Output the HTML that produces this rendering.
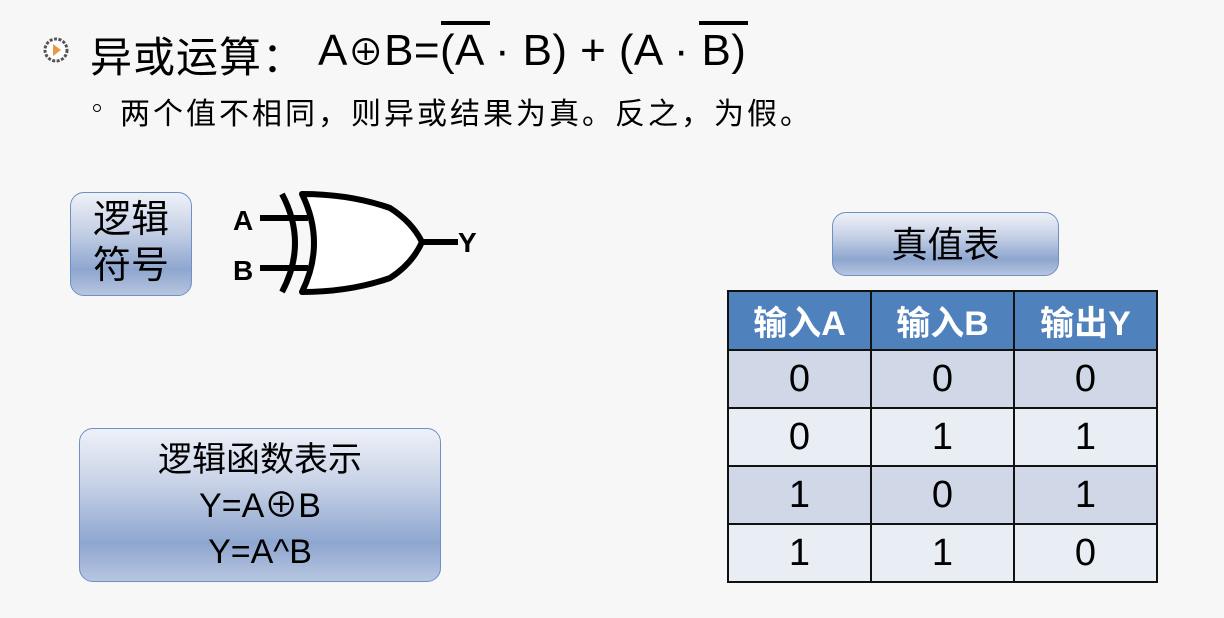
<!DOCTYPE html>
<html><head><meta charset="utf-8"><style>
body{margin:0;width:1224px;height:618px;background:#f7f7f7;position:relative;overflow:hidden;font-family:"Liberation Sans","Noto Sans CJK SC",sans-serif;color:#000}
.a{position:absolute;white-space:nowrap}
.btn{position:absolute;border:1px solid #6f90c4;border-radius:14px;background:linear-gradient(#eef1f8 0%,#c9d3e7 35%,#8ea6cf 75%,#b7c5e0 100%);text-align:center;box-sizing:border-box}
table{position:absolute;left:727px;top:290px;border-collapse:collapse}
td{border:2px solid #111;width:141px;text-align:center;font-size:38px;height:56px;padding:0}
th{border:2px solid #111;background:#4f81bd;color:#fff;font-size:34px;font-weight:bold;height:57px;padding:0}
.r1 td{background:#d0d8e8}.r2 td{background:#e9edf4}
</style></head><body>
<svg class="a" style="left:42px;top:36px" width="28" height="28" viewBox="0 0 28 28"><circle cx="14" cy="14" r="11" fill="#fff" stroke="#555" stroke-width="3" stroke-dasharray="3 1.5"/><path d="M11 8 L19 14 L11 20Z" fill="#e39b4a"/></svg>
<div class="a" style="left:90px;top:24px;font-size:42px;letter-spacing:1px">异或运算：</div>
<div class="a" style="left:318px;top:24px;font-size:44px;letter-spacing:0.4px">A<span style="font-size:36px">⊕</span>B=(A · B) + (A · B)</div>
<div class="a" style="left:441px;top:21px;width:49px;height:4px;background:#000"></div>
<div class="a" style="left:699px;top:21px;width:49px;height:4px;background:#000"></div>
<div class="a" style="left:93px;top:104px;width:8px;height:8px;border:1.5px solid #000;border-radius:50%;box-sizing:border-box"></div>
<div class="a" style="left:120px;top:89px;font-size:30px;letter-spacing:3px">两个值不相同，则异或结果为真。反之，为假。</div>
<div class="btn" style="left:70px;top:192px;width:122px;height:104px;font-size:38px;line-height:46px;padding-top:4px">逻辑<br>符号</div>
<svg class="a" style="left:230px;top:188px" width="260" height="112" viewBox="0 0 260 112">
<path d="M72 6 Q120 6 160 20 Q182 34 192 54 Q182 76 160 90 Q120 104 72 104 Q96 55 72 6Z" fill="#fff" stroke="#000" stroke-width="6" stroke-linejoin="round"/>
<path d="M52 6 Q78 55 52 104" fill="none" stroke="#000" stroke-width="6"/>
<line x1="30" y1="30" x2="78" y2="30" stroke="#000" stroke-width="6"/>
<line x1="30" y1="80" x2="78" y2="80" stroke="#000" stroke-width="6"/>
<line x1="190" y1="54" x2="228" y2="54" stroke="#000" stroke-width="6"/>
<text x="3" y="42" font-family="Liberation Sans" font-weight="bold" font-size="28">A</text>
<text x="3" y="92" font-family="Liberation Sans" font-weight="bold" font-size="28">B</text>
<text x="228" y="64" font-family="Liberation Sans" font-weight="bold" font-size="28">Y</text>
</svg>
<div class="btn" style="left:832px;top:212px;width:227px;height:64px;font-size:36px;line-height:64px">真值表</div>
<table>
<tr><th>输入A</th><th>输入B</th><th>输出Y</th></tr>
<tr class="r1"><td>0</td><td>0</td><td>0</td></tr>
<tr class="r2"><td>0</td><td>1</td><td>1</td></tr>
<tr class="r1"><td>1</td><td>0</td><td>1</td></tr>
<tr class="r2"><td>1</td><td>1</td><td>0</td></tr>
</table>
<div class="btn" style="left:79px;top:428px;width:362px;height:154px;font-size:34px;line-height:46px;padding-top:8px">逻辑函数表示<br>Y=A⊕B<br>Y=A^B</div>
</body></html>
